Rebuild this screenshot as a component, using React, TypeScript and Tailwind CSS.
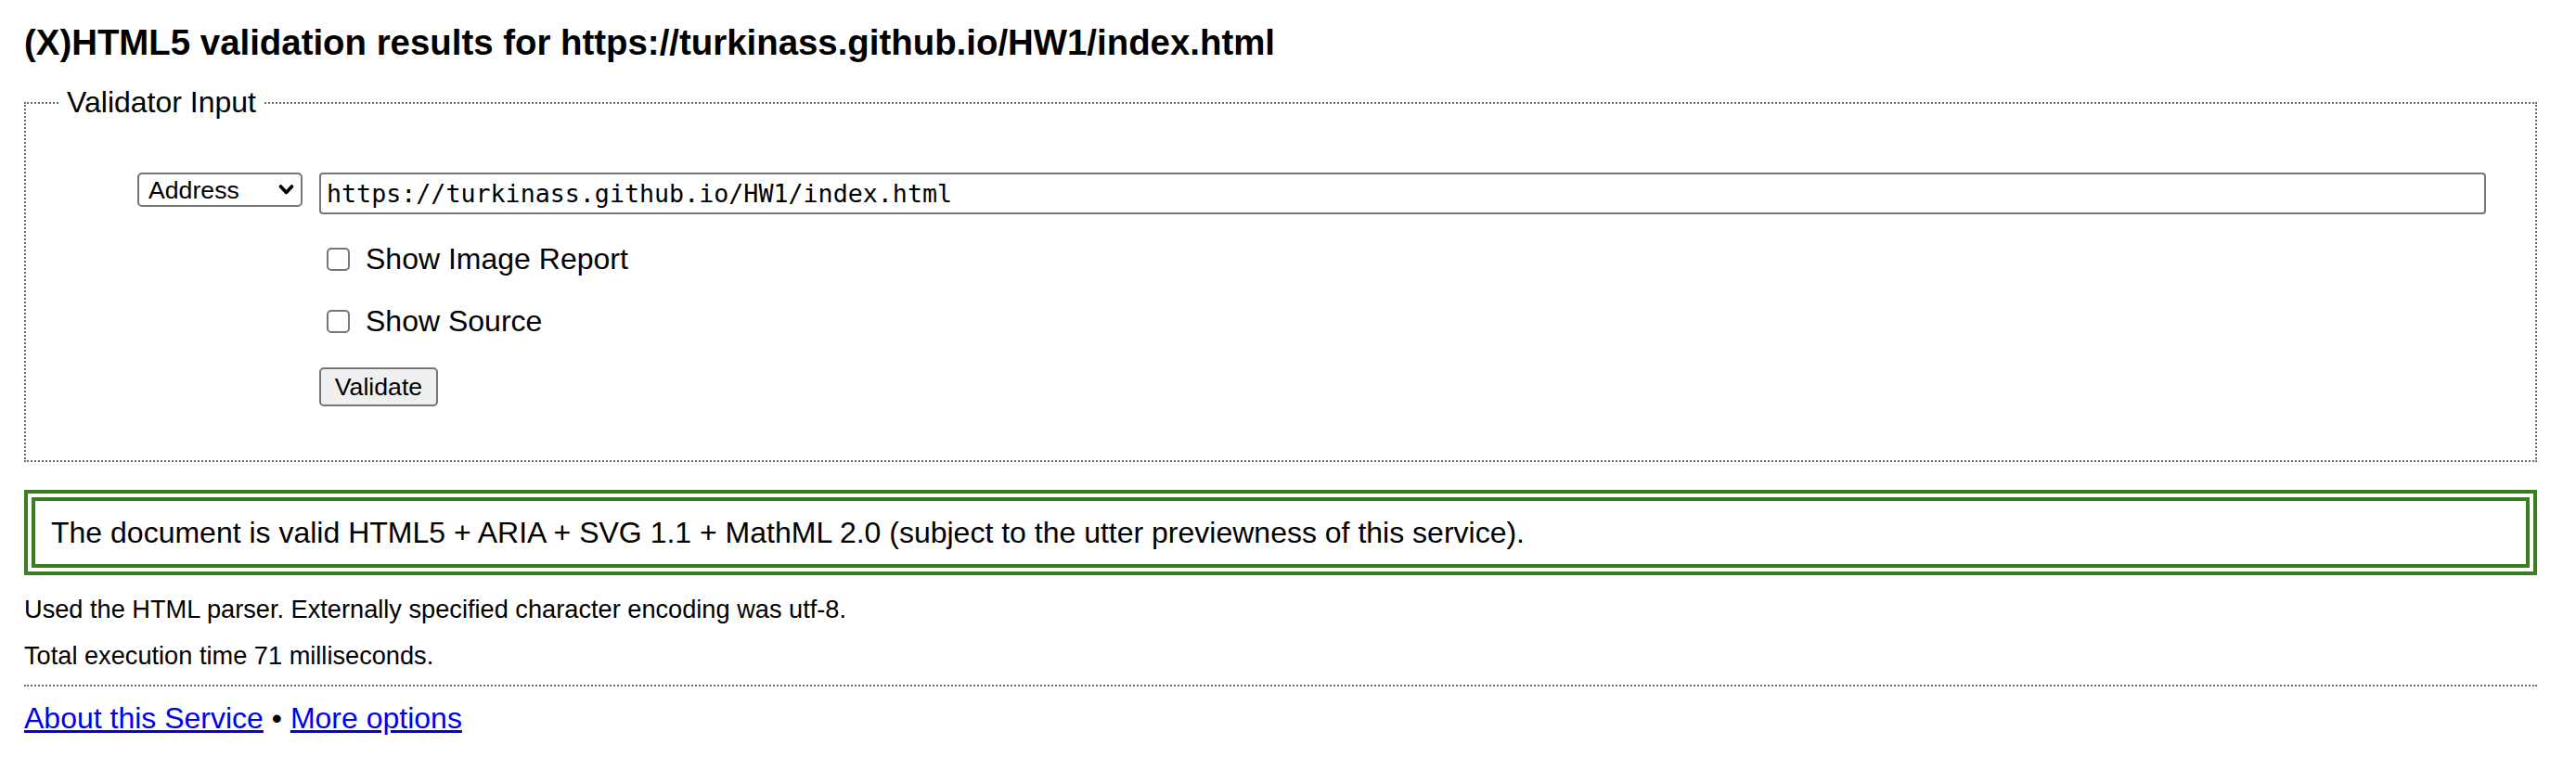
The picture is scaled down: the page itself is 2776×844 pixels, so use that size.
import React from "react";

export default function App() {
  return (
    <div
      className="min-h-screen w-full bg-white pl-[26px] pr-[42px] text-black"
      style={{ fontFamily: '"Liberation Sans", Arial, Helvetica, sans-serif' }}
    >
      <h2 className="pt-[24px] text-[38.4px] font-bold leading-[44px]">
        (X)HTML5 validation results for https://turkinass.github.io/HW1/index.html
      </h2>

      <fieldset className="mt-[24px] border-2 border-dotted border-[#6f6f6f] pb-[58px]">
        <legend className="ml-[36px] px-[8px] text-[32px] leading-[37px]">Validator Input</legend>
        <div className="pl-[120px] pr-[53px] pt-[57px]">
          <div className="flex items-start gap-[18px]">
            <div className="relative h-[37px] w-[178px] shrink-0">
              <select
                defaultValue="Address"
                className="h-[37px] w-full appearance-none rounded-[5px] border-2 border-[#767676] bg-white pl-[10px] text-[26.67px] leading-[30px] text-black outline-none"
                style={{ fontFamily: '"Liberation Sans", Arial, sans-serif' }}
              >
                <option>Address</option>
                <option>File Upload</option>
                <option>Text Field</option>
              </select>
              <svg
                className="pointer-events-none absolute right-[9px] top-[12px]"
                width="17"
                height="13"
                viewBox="0 0 17 13"
              >
                <path d="M2.5 3 L8.5 9.5 L14.5 3" fill="none" stroke="#000" strokeWidth="3.6" strokeLinecap="round" strokeLinejoin="round" />
              </svg>
            </div>
            <input
              type="text"
              defaultValue="https://turkinass.github.io/HW1/index.html"
              className="h-[45px] min-w-0 flex-1 rounded-[4px] border-2 border-[#767676] bg-white pl-[6px] text-[26.67px] text-black outline-none"
              style={{ fontFamily: '"DejaVu Sans Mono", "Liberation Mono", monospace' }}
            />
          </div>

          <div className="ml-[196px]">
            <label className="mt-[30px] flex h-[37px] items-center text-[32px] leading-[37px]">
              <input
                type="checkbox"
                className="ml-[8px] mr-[17px] h-[25px] w-[25px] appearance-none rounded-[5px] border-2 border-[#767676] bg-white"
              />
              <span>Show Image Report</span>
            </label>
            <label className="mt-[30px] flex h-[37px] items-center text-[32px] leading-[37px]">
              <input
                type="checkbox"
                className="ml-[8px] mr-[17px] h-[25px] w-[25px] appearance-none rounded-[5px] border-2 border-[#767676] bg-white"
              />
              <span>Show Source</span>
            </label>
            <button
              type="button"
              className="mt-[31px] flex h-[42px] w-[128px] items-center justify-center rounded-[5px] border-2 border-[#767676] bg-[#efefef] text-[26.67px] leading-[30px] text-black"
            >
              Validate
            </button>
          </div>
        </div>
      </fieldset>

      <div className="mt-[30px] border-[12px] border-double border-[#3a7d23] px-[17px] py-[15px] text-[32px] leading-[38px]">
        The document is valid HTML5 + ARIA + SVG 1.1 + MathML 2.0 (subject to the utter previewness of this service).
      </div>

      <p className="mt-[12px] text-[27.2px] leading-[50px]">
        Used the HTML parser. Externally specified character encoding was utf-8.
      </p>
      <p className="text-[27.2px] leading-[50px]">Total execution time 71 milliseconds.</p>

      <div className="mt-[6px] border-t-2 border-dotted border-[#6f6f6f]" />

      <p className="mt-[16px] text-[32px] leading-[37px]">
        <a href="#" className="text-[#0000ee] underline">
          About this Service
        </a>
        <span> • </span>
        <a href="#" className="text-[#0000ee] underline">
          More options
        </a>
      </p>
    </div>
  );
}
